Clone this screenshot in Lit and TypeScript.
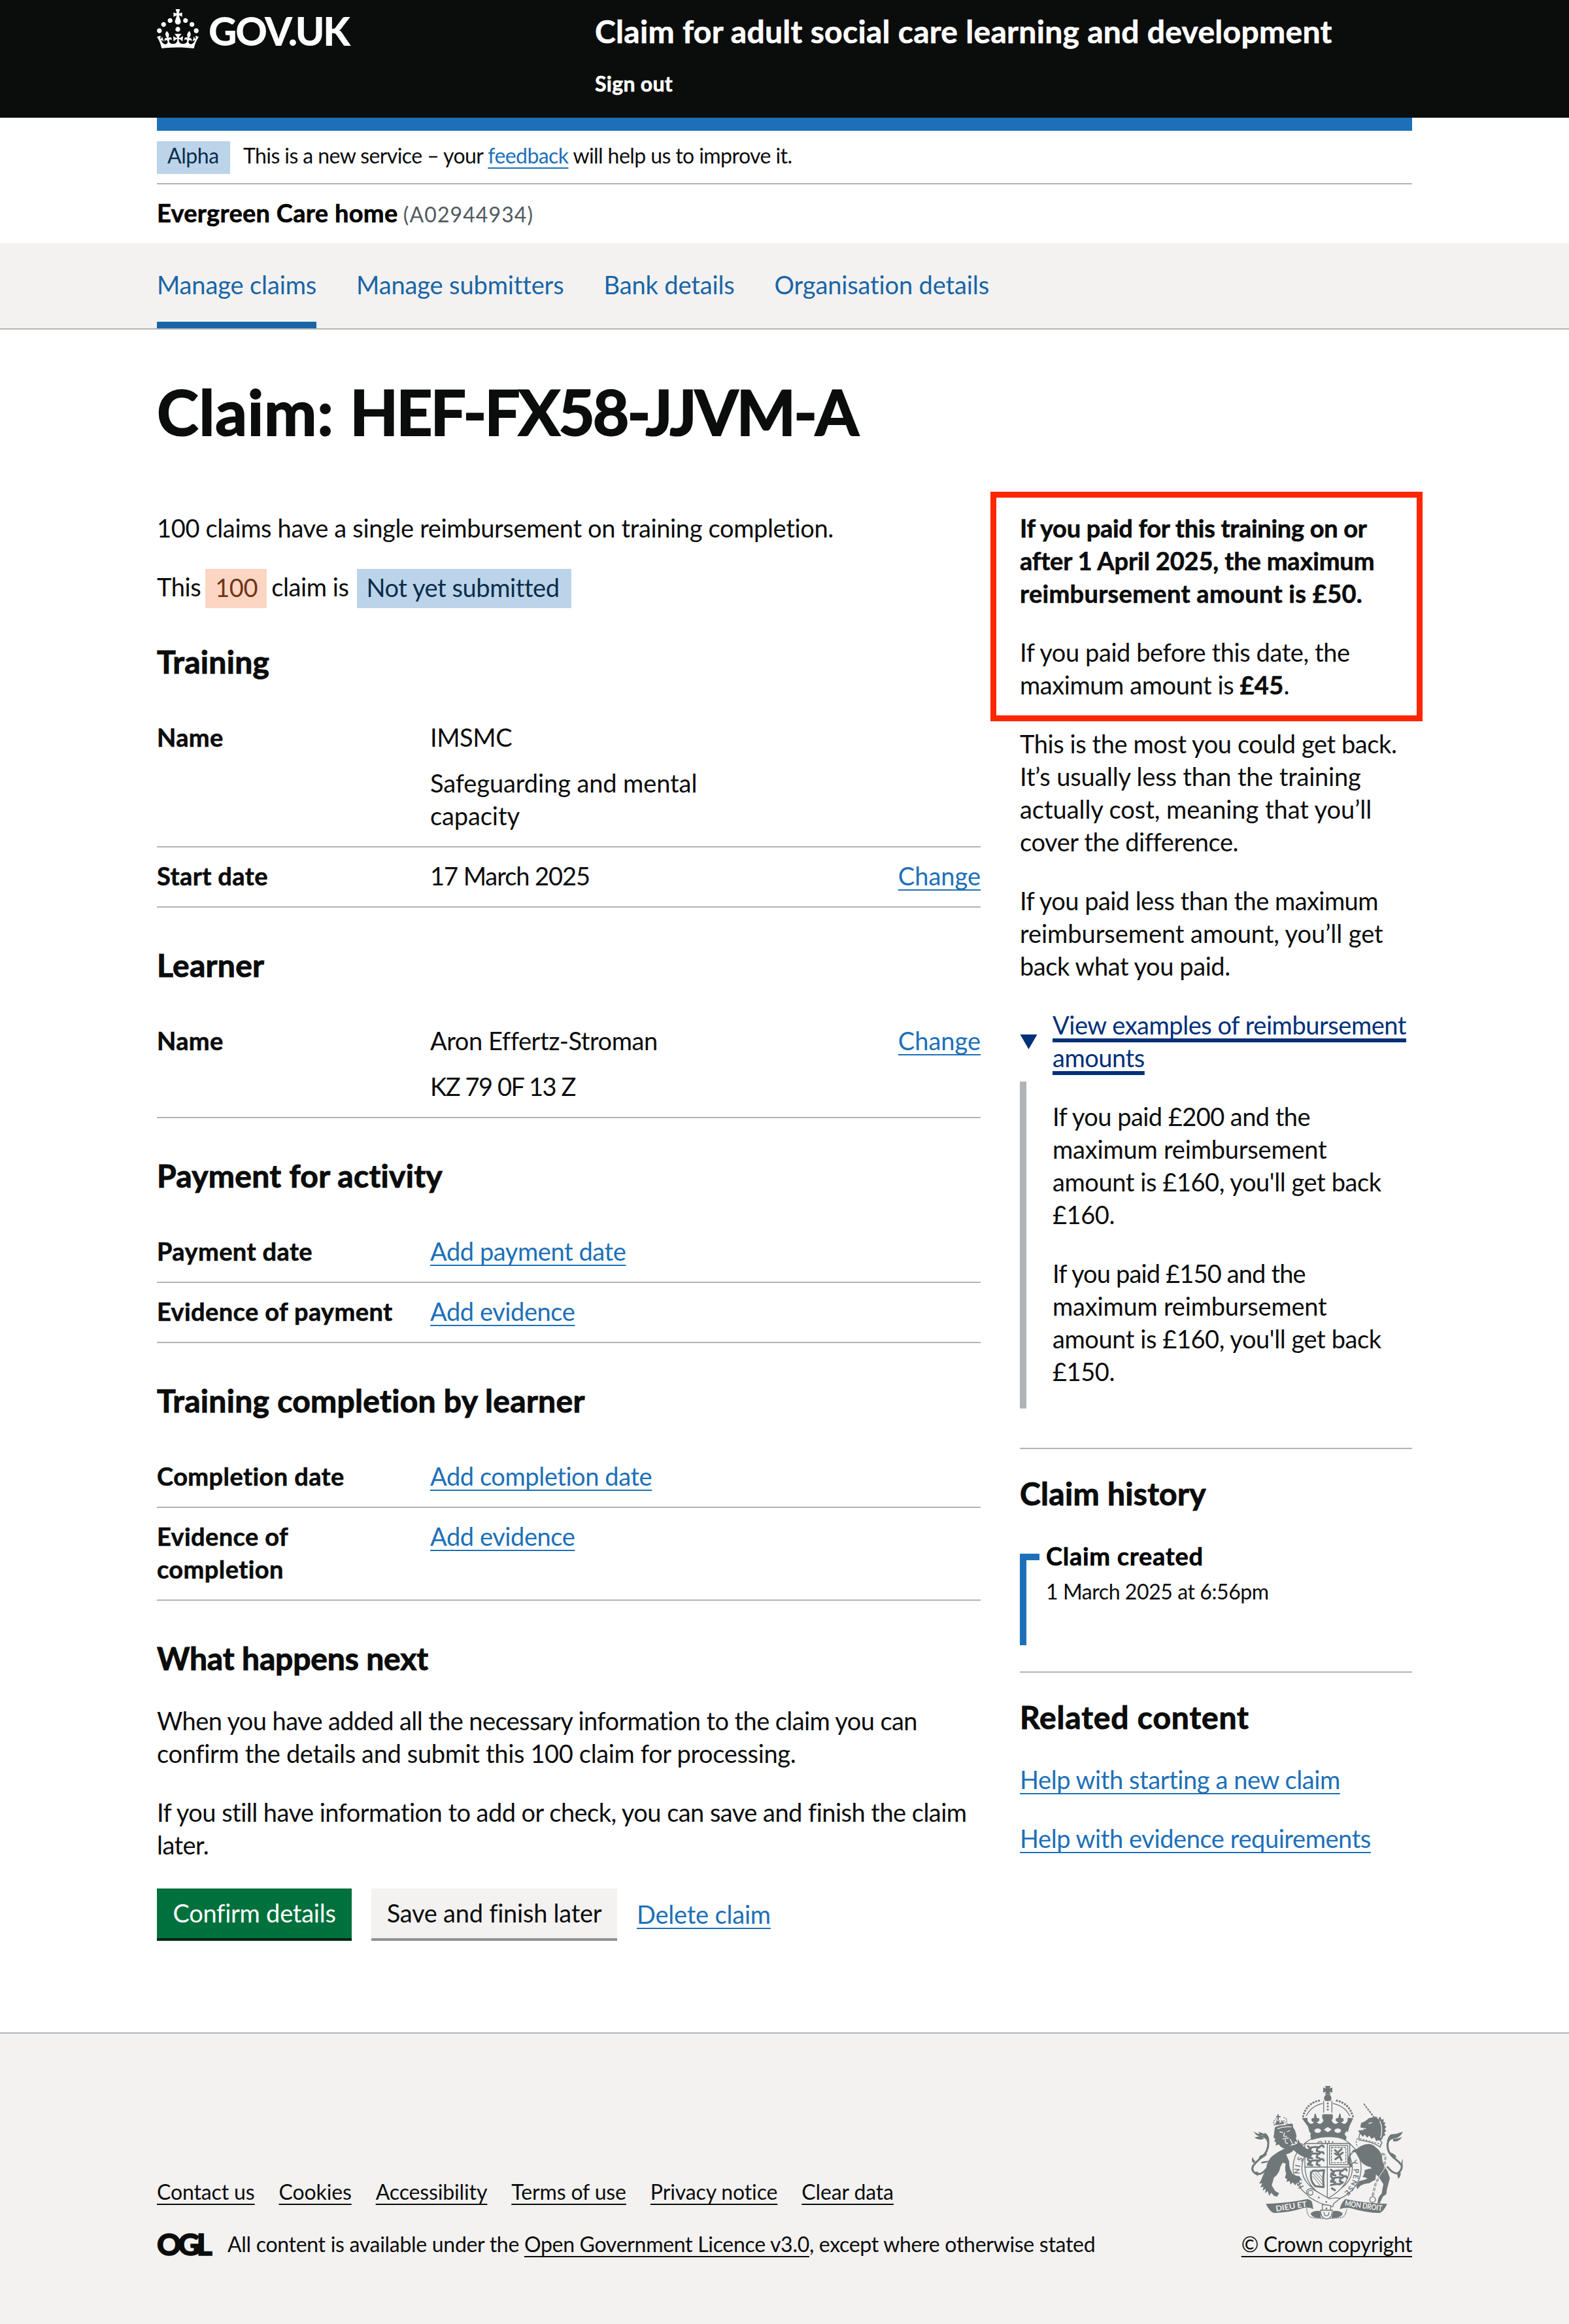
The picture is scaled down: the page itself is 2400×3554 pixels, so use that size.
import { LitElement, html, css, svg, nothing, TemplateResult } from "lit";
import { customElement, property } from "lit/decorators.js";

const base = css`
  * { box-sizing: border-box; }
  p, h1, h2, dl, dd, dt { margin: 0; }
  a {
    color: #1d70b8;
    text-decoration: underline;
    text-decoration-thickness: 2px;
    text-underline-offset: 6px;
    text-decoration-skip-ink: none;
  }
  b, h1, h2, dt { font-weight: 700; letter-spacing: 0.3px; -webkit-text-stroke: 0.6px currentColor; }
  h2 { -webkit-text-stroke-width: 1px; }
`;

@customElement("gov-crown")
class GovCrown extends LitElement {
  static styles = css`
    :host { display: block; width: 64px; height: 60px; }
    svg { display: block; width: 64px; height: 60px; fill: #fff; }
  `;
  render() {
    return html`<svg viewBox="0 0 32 30" aria-hidden="true">
      <path d="M22.6 10.4c-1 .4-2-.1-2.4-1-.4-.9.1-2 1-2.4.9-.4 2 .1 2.4 1s-.1 2-1 2.4m-5.9 6.7c-.9.4-2-.1-2.4-1-.4-.9.1-2 1-2.4.9-.4 2 .1 2.4 1s-.1 2-1 2.4m10.8-3.7c-1 .4-2-.1-2.4-1-.4-.9.1-2 1-2.4.9-.4 2 .1 2.4 1s0 2-1 2.4m3.3 4.8c-1 .4-2-.1-2.4-1-.4-.9.1-2 1-2.4.9-.4 2 .1 2.4 1s-.1 2-1 2.4M17 4.7l2.3 1.2V2.5l-2.3.7-.2-.2.9-3h-3.4l.9 3-.2.2c-.1.1-2.3-.7-2.3-.7v3.4L15 4.7c.1.1.1.2.2.2l-1.3 4c-.1.2-.1.4-.1.6 0 1.1.8 2 1.9 2.2h.7c1-.2 1.9-1.1 1.9-2.1 0-.2 0-.4-.1-.6l-1.3-4c-.1-.2 0-.2.1-.3m-7.6 5.7c.9.4 2-.1 2.4-1 .4-.9-.1-2-1-2.4-.9-.4-2 .1-2.4 1s0 2 1 2.4m-5 3c.9.4 2-.1 2.4-1 .4-.9-.1-2-1-2.4-.9-.4-2 .1-2.4 1s.1 2 1 2.4m-3.2 4.8c.9.4 2-.1 2.4-1 .4-.9-.1-2-1-2.4-.9-.4-2 .1-2.4 1s0 2 1 2.4m14.8 11c4.4 0 8.6.3 12.3.8 1.1-4.5 2.4-7 3.7-8.8l-2.5-.9c.2 1.3.3 1.9 0 2.7-.4-.4-.8-1.1-1.1-2.3l-1.2 4c.7-.5 1.3-.8 2-.9-1.1 2.5-2.6 3.1-3.5 3-1.1-.2-1.7-1.2-1.5-2.1.3-1.2 1.5-1.5 2.1-.1 1.1-2.3-.8-3-2-2.3 1.9-1.9 2.1-3.5.6-5.6-2.1 1.6-2.1 3.2-1.2 5.5-1.2-1.4-3.2-.6-2.5 1.6.9-1.4 2.1-.5 1.9.8-.2 1.1-1.7 2.1-3.5 1.9-2.7-.2-2.9-2.1-2.9-3.6.7-.1 1.9.5 2.9 1.9l.4-4.3c-1.1 1.1-2.1 1.4-3.2 1.4.4-1.2 2.1-3 2.1-3h-5.4s1.7 1.9 2.1 3c-1.1 0-2.1-.2-3.2-1.4l.4 4.3c1-1.4 2.2-2 2.9-1.9-.1 1.5-.2 3.4-2.9 3.6-1.9.2-3.4-.8-3.5-1.9-.2-1.3 1-2.2 1.9-.8.7-2.3-1.2-3-2.5-1.6.9-2.2.9-3.9-1.2-5.5-1.5 2-1.3 3.7.6 5.6-1.2-.7-3.1 0-2 2.3.6-1.4 1.8-1.1 2.1.1.2.9-.3 1.9-1.5 2.1-.9.2-2.4-.5-3.5-3 .6 0 1.2.3 2 .9l-1.2-4c-.3 1.1-.7 1.9-1.1 2.3-.3-.8-.2-1.4 0-2.7l-2.9.9C1.3 23 2.6 25.5 3.7 30c3.7-.5 7.9-.8 12.3-.8"/>
    </svg>`;
  }
}

@customElement("royal-arms")
class RoyalArms extends LitElement {
  static styles = css`
    :host { display: block; width: 232px; height: 204px; }
    svg { display: block; width: 232px; height: 204px; font-family: Lato, "Open Sans", sans-serif; font-weight: 700; }
    .f { fill: #6f7779; }
    .g { fill: #f3f2f1; }
    .l { fill: none; stroke: #6f7779; stroke-width: 4; }
    .gl { fill: none; stroke: #f3f2f1; stroke-width: 4; }
    .m { fill: none; stroke: #6f7779; stroke-width: 9; stroke-linecap: round; stroke-linejoin: round; }
    .pearls { stroke-width: 10; }
    .fine { stroke-width: 3; }
    .go { fill: #f3f2f1; stroke: #6f7779; stroke-width: 4; }
  `;
  passant(x: number, y: number) {
    return svg`<path class="m" d="M${x + 6} ${y + 4}l8 8M${x + 14} ${y + 12}q24-8 44-2M${x + 20} ${y + 14}l-6 14 12 2M${x + 50} ${y + 12}l-4 14 14 4M${x + 58} ${y + 8}q16-14 20 0M${x + 8} ${y + 20}l-2 8"/>`;
  }
  render() {
    return html`<svg viewBox="222 90 696 612" aria-hidden="true">
      <defs>
        <path id="garter" d="M464 552A124 121 0 1 1 645 580"/>
      </defs>
      <ellipse class="go" cx="570" cy="466" rx="156" ry="150"/>
      <ellipse class="l" cx="570" cy="466" rx="116" ry="112"/>
      <text class="f" font-size="34"><textPath href="#garter" textLength="560">HONI SOIT QUI MAL Y PENSE</textPath></text>
      <path class="f" d="M560 90h26l-5 12 13-5v24l-13-5 5 12h-26l5-12-13 5V97l13 5z"/>
      <path class="f" d="M556 150q0-22 17-22t17 22l-4 8h-26z"/>
      <path class="m pearls" stroke-dasharray="0 13.5" d="M460 229Q476 166 542 155M688 229Q670 166 604 155"/>
      <path class="l" d="M474 228Q496 182 550 170M674 228Q652 182 596 170"/>
      <path class="l" d="M554 158v54M592 158v54"/>
      <path class="m" stroke-dasharray="0 14" d="M573 156v56"/>
      <path class="f" d="M454 238l26-2v14q16 24 30 6-12 0-12-12 2-10 12-6 0-14 5-24 6 10 8 24 10-4 12 6-2 12-14 12 20 18 32-6l-6-16 2-14h46l2 14-6 16q14 24 32 6-12 0-14-12 2-10 12-6 2-14 8-24 5 10 5 24 10-4 12 6 0 12-12 12 18 18 30-6v-14l26 2-18 38-8 30-8 32q-76-26-158 0l-8-32-8-30z"/>
      <ellipse class="g" cx="527" cy="295" rx="15" ry="10"/>
      <ellipse class="g" cx="619" cy="295" rx="15" ry="10"/>
      <path class="g" d="M555 290l18-12 18 12-18 12z"/>
      <path class="g" d="M474 312l12-16 10 14-8 14zM672 312l-12-16-10 14 8 14z"/>
      <path class="go" d="M468 354h206v106q-2 96-103 146-101-50-103-146z"/>
      <path class="l" d="M571 354v250M468 462h206"/>
      ${this.passant(476, 362)}${this.passant(476, 392)}${this.passant(476, 424)}
      ${this.passant(582, 470)}${this.passant(582, 502)}
      <path class="m" d="M588 545q20-8 40-4l14-8M592 560l14 8"/>
      <rect class="l" x="581" y="363" width="84" height="88"/>
      <rect class="l" x="590" y="372" width="66" height="70" stroke-dasharray="10 4"/>
      <path class="m" d="M606 384l12 12 18-16M618 396l10 16-20 14M628 412l8 18M628 406l14-10M606 400l10 6"/>
      <path class="m" d="M496 486q-6 40 20 64l38 4q-4-44 2-78l-30 4q-20-6-28 6"/>
      <path class="l fine" d="M504 490l44 52M514 486l36 42M526 484l24 28M504 504l34 42"/>
      <path class="go" d="M478 568q14-14 34 0l70 40q26-8 48-2l-30 24-4 14q-60-10-110-46-14-16-8-30z"/>
      <circle class="l" cx="494" cy="580" r="11"/>
      <circle class="f" cx="532" cy="602" r="4"/><circle class="f" cx="566" cy="622" r="4"/>
      <path class="go" d="M548 634v34h38v-30z"/>
      <circle class="f" cx="567" cy="652" r="4"/>

      <path class="f" d="M432 360q-26-2-48 14-34 12-66 38-26 24-28 60-16 30-22 48l-10 18 14-2-8 20 14-4-4 18 14-8-2 20 12-10 6 22 10-14 12 14 14 4 10-16-18-10-16-26 10-36q24-16 30-50l10-18 14 4q-6 26 2 46l-6 20 10 4-2 14 14-4 4 16 10-10 12 14 6-14 16 6-6-18 18 4-16-16-30-14q-18-30-16-58l-14-32q26-8 34-20 30 30 64 36l6-8 10 2-4-14 12-4-12-8 4-10-16 2q-30-16-44-46z"/>
      <path class="f" d="M330 280q20-12 44-10 32-10 38-6l2 16q14 20 16 44l-4 4 8 20-14-4 4 14-14-4q-14 20-34 24-18-4-28-20l-14 6 2-18-8 2 4-20-8 2z"/>
      <path class="gl" d="M342 286q30-12 64-8M352 300l16 4M386 300l14-6M376 304l-6 16 16 2M366 334q16-8 28-4M380 334q-8 22 10 18M400 334l10 18"/>
      <path class="l" stroke-dasharray="7 4" d="M328 272l-4-20 14-14 14-4M386 266l-2-24-14-8M332 264l48-6M336 250h44"/>
      <path class="f" d="M342 220h6v8h8v6h-8v12h-6v-12h-6v-6h6zM336 256l10-8 8 12 12-10 8 14-44 6z"/>
      <path class="m" d="M290 472q-24 30-48 20-24-16-10-38 16-20 40-38 30-30 28-66-4-24-24-28"/>
      <path class="f" d="M304 350q-6-22-26-32-20-4-22-18l26 10 2-6q24 16 20 46zM276 322q-30 4-44-24 14 12 30 12zM280 332q-22 10-44-6 22-4 30-8zM232 444q-12-10-4-28 6 16 14 20zM256 426q-4-20 40-26-10 18-32 24zM270 438q20-6 36-4-20 14-40 10zM236 484q12 2 12 22 8-6 6-22z"/>
      <path class="f" d="M424 356q20-4 34-2l-32 30z"/>

      <path class="f" d="M722 280l4-20q16-4 36-22l32-8 8 10q24 10 24 34 12 40-4 56-6 18-14 20-30-18-76-18l-16-32-4-6 28-2q-10-12-18-12z"/>
      <path class="f" d="M806 236l10-4 2 12 12-2-2 14 10 2-6 12 10 6-8 12 8 8-10 8 6 12-12 4-2 14-10-4q14-50-8-94z"/>
      <path class="gl" d="M760 262l16-4M812 250q16 34 4 78M730 284l18 2"/>
      <path class="l" stroke-dasharray="10 4" d="M738 172l44 60M739 171l46 60"/>
      <path class="f" d="M786 246l10-16 8 14z"/>
      <path class="go" d="M716 338q0-24 6-32l12 14 8-10 12 14 10-10 10 16 14-8 8 18 14-4 12 14q-8 12-8 20-40-26-98-32z"/>
      <path class="l" stroke-dasharray="8 6" d="M710 330q-14 20 2 40M720 332l100 26"/>
      <path class="f" d="M684 392q4-10 24-14 14-14 38-20 30-6 48 14 20 14 28 40 0 34 24 66l12 34-14 54-2 20-16 12-14 30-10 2q-2-28 18-46l8-44-22-34q-28-22-36-44-34-6-50-34l-20-34-18 2q-8 14-4 46l10 16-10 6q-20-22-8-56z"/>
      <path class="f" d="M742 476q24-10 54-6l-4 50-30 16q-24 2-40 12l-14 16-4-16 14-22q26-4 38-12l-24-8q12-12 10-30z"/>
      <path class="m" d="M848 462q20 28 44 30 24-16 20-38-12-18-36-34-34-30-28-66 4-26 26-28"/>
      <path class="f" d="M846 356q-4-26 16-44l24-2 32-10q-12 24-34 30-26 2-38 26zM872 334q20 0 42-10-14 24-40 20zM888 416q-10-20-38-22 14 20 32 26zM912 454q-2-20 4-30 2 30-2 40zM890 486l6 30q12-10 12-28z"/>
      <path class="m" stroke-dasharray="9 13" d="M824 402q16 2 12 30l-4 40-20 28-20 40-12 50"/>
      <path class="gl fine" d="M824 402q16 2 12 30l-4 40-20 28-20 40-12 50"/>
      <circle class="l" cx="779" cy="611" r="13"/>

      <path class="f" d="M289 631q90-2 190-22 16 2 22 14l6 32q-26-12-50-4-60 20-130 22-20-4-38-42z"/>
      <path class="f" d="M846 631q-96-2-192-22-18 12-26 46 34-12 60-2 60 18 122 20 16-2 36-42z"/>
      <text class="g" font-size="36" textLength="144" lengthAdjust="spacingAndGlyphs" transform="translate(336 666) rotate(-9)">DIEU ET</text>
      <text class="g" font-size="36" textLength="172" lengthAdjust="spacingAndGlyphs" transform="translate(650 640) rotate(8)">MON DROIT</text>
      <path class="l" stroke-dasharray="6 3" d="M476 652q4 40 26 42 60 8 134 0 20-6 24-40"/>
      <path class="f" d="M494 676q12-16 44-12l4 32q-40 2-48-20zM642 676q-12-16-44-12l-8 32q44 2 52-20z"/>
      <path class="go" d="M540 660h54q0 38-27 40-27-2-27-40z"/>
      <path class="l" d="M556 668q0 18 11 18t12-18"/>
    </svg>`;
  }
}

interface Row { key: TemplateResult | string; value: TemplateResult; change?: boolean }

@customElement("summary-section")
class SummarySection extends LitElement {
  @property() heading = "";
  @property({ attribute: false }) rows: Row[] = [];
  static styles = [base, css`
    :host { display: block; }
    h2 { font-size: 48px; line-height: 60px; margin-bottom: 42px; }
    dt { letter-spacing: 0.4px; }
    .row { display: grid; grid-template-columns: 418px 1fr auto; padding: 18px 0 22px; border-bottom: 2px solid #b1b4b6; }
    .row p + p { margin-top: 20px; }
    .n { letter-spacing: -1.05px; }
    .ni { letter-spacing: -1.45px; }
    .w { letter-spacing: -0.1px; }
    .change { letter-spacing: 0; }
  `];
  render() {
    return html`<h2>${this.heading}</h2>
      <dl>${this.rows.map(r => html`<div class="row">
        <dt>${r.key}</dt><dd>${r.value}</dd>
        ${r.change ? html`<dd class="change"><a>Change</a></dd>` : nothing}
      </div>`)}</dl>`;
  }
}

@customElement("app-root")
class AppRoot extends LitElement {
  static styles = [base, css`
    :host {
      display: block; width: 2400px; background: #fff; color: #0b0c0c;
      font: 400 38px/50px Lato, "Open Sans", sans-serif; letter-spacing: -0.42px;
    }
    .wrap { width: 1920px; margin: 0 auto; }
    .small { font-size: 32px; line-height: 40px; }
    header { background: #0b0c0c; height: 180px; color: #fff; }
    header .wrap { display: flex; }
    .logo { display: flex; width: 670px; padding-top: 14px; gap: 15px; }
    .logo b { font-size: 60px; line-height: 72px; font-weight: 900; letter-spacing: -2.3px; margin-top: -3px; -webkit-text-stroke: 0; }
    .svc { padding-top: 18px; }
    .svc b { display: block; font-size: 48px; line-height: 60px; }
    .svc .out { font-size: 32px; line-height: 40px; margin-top: 30px; }
    .bar { height: 20px; background: #1d70b8; }
    .phase { display: flex; align-items: flex-start; gap: 20px; height: 82px; padding-top: 16px; border-bottom: 2px solid #b1b4b6; }
    .phase .tag { background: #bbd4ea; color: #0c2d4a; padding: 0 16px; width: 112px; height: 50px; line-height: 43px; font-size: 32px; }
    .phase .msg { padding-top: 2px; letter-spacing: -0.58px; white-space: nowrap; }
    .org { padding: 18px 0 22px; height: 90px; }
    .org b { color: #000; }
    .org span { font-size: 32px; color: #505a5f; letter-spacing: 1.1px; margin-left: -1px; }
    nav { background: #f3f2f1; border-bottom: 2px solid #b1b4b6; }
    nav .wrap { display: flex; gap: 61px; }
    nav .item { color: #1a65a6; padding: 38px 0 32px; border-bottom: 10px solid transparent; letter-spacing: -0.13px; white-space: nowrap; }
    nav .on { border-color: #1a65a6; }
    main { padding: 75px 0 140px; }
    h1 { font-size: 96px; line-height: 100px; margin-bottom: 103px; letter-spacing: -2.95px; -webkit-text-stroke-width: 2px; }
    h1 span { letter-spacing: 0.9px; }
    h2 { font-size: 48px; line-height: 60px; margin-bottom: 40px; }
    .cols { display: flex; gap: 60px; }
    .left { width: 1260px; }
    .right { width: 600px; position: relative; white-space: nowrap; }
    p + p { margin-top: 40px; }
    .chips { display: flex; height: 50px; align-items: flex-start; gap: 7px; white-space: nowrap; }
    .chip { height: 60px; line-height: 56px; margin-top: -2px; padding: 0 15px; }
    .orange { background: #fcd6c3; color: #6e3619; width: 94px; }
    .blue { background: #bbd4ea; color: #0c2d4a; width: 328px; margin-left: 5px; }
    .first { margin-top: 60px; }
    .sec { margin-top: 58px; }
    .tight { letter-spacing: -0.15px; }
    .n1 { letter-spacing: -0.6px; }
    .n2 { letter-spacing: -0.54px; }
    .n3 { letter-spacing: -0.35px; }
    .btns { display: flex; gap: 30px; margin-top: 42px; height: 80px; white-space: nowrap; }
    .btn { height: 80px; padding: 12px 0; text-align: center; color: #fff; background: #00703c; border-bottom: 4px solid #002413; width: 298px; letter-spacing: -0.25px; }
    .btn.grey { background: #f3f2f1; color: #0b0c0c; border-color: #929191; width: 376px; }
    .del { padding-top: 14px; letter-spacing: -0.2px; }
    .mark { position: absolute; left: -45px; top: -30px; width: 661px; height: 351px; border: 9px solid #ff2600; }
    .k1 { letter-spacing: -0.3px; }
    .k2 { letter-spacing: -0.15px; }
    .k3 { letter-spacing: 0.3px; }
    .s0 { letter-spacing: -0.05px; }
    .s1 { letter-spacing: -0.2px; }
    .s2 { letter-spacing: -0.55px; }
    .s3 { letter-spacing: -0.85px; }
    .sum { display: flex; margin-top: 40px; }
    .tri { width: 50px; padding-top: 40px; }
    .tri svg { display: block; fill: #003078; }
    .sum a { color: #003078; text-decoration-thickness: 6px; letter-spacing: -0.45px; }
    .det { border-left: 10px solid #b1b4b6; margin: 12px 0 60px; padding: 28px 0 32px 40px; }
    .hr { height: 2px; background: #b1b4b6; margin-bottom: 38px; }
    .tl { display: flex; }
    .stem { width: 30px; height: 140px; margin: 22px 10px 40px 0; border-left: 10px solid #1d70b8; }
    .stem div { height: 10px; background: #1d70b8; }
    .tl b { color: #000; letter-spacing: 0.7px; }
    .tl .small { margin-top: 10px; }
    .wide { letter-spacing: 0.85px; }
    footer { background: #f3f2f1; border-top: 2px solid #b1b4b6; height: 446px; padding-top: 80px; }
    footer .wrap { display: flex; justify-content: space-between; align-items: flex-end; height: 262px; font-size: 32px; line-height: 40px; white-space: nowrap; }
    footer a { color: #0b0c0c; }
    .links { display: flex; gap: 37px; margin-bottom: 40px; letter-spacing: -0.13px; }
    .lic { display: flex; letter-spacing: -0.3px; }
    .ogl { width: 108px; font-weight: 900; font-size: 46px; letter-spacing: -5px; -webkit-text-stroke: 1.5px #0b0c0c; }
    .crest { display: flex; flex-direction: column; align-items: flex-end; gap: 18px; width: 262px; }
    .crest royal-arms { margin-right: 14px; }
  `];

  private link = (t: string) => html`<p><a>${t}</a></p>`;

  render() {
    const training: Row[] = [
      { key: "Name", value: html`<p>IMSMC</p><p class="w">Safeguarding and mental<br>capacity</p>` },
      { key: "Start date", value: html`<p class="n">17 March 2025</p>`, change: true },
    ];
    const learner: Row[] = [
      { key: "Name", value: html`<p>Aron Effertz-Stroman</p><p class="ni">KZ 79 0F 13 Z</p>`, change: true },
    ];
    const payment: Row[] = [
      { key: "Payment date", value: this.link("Add payment date") },
      { key: "Evidence of payment", value: this.link("Add evidence") },
    ];
    const completion: Row[] = [
      { key: "Completion date", value: this.link("Add completion date") },
      { key: html`Evidence of<br>completion`, value: this.link("Add evidence") },
    ];
    return html`
      <header><div class="wrap">
        <div class="logo"><gov-crown></gov-crown><b>GOV.UK</b></div>
        <div class="svc"><b>Claim for adult social care learning and development</b><b class="out">Sign out</b></div>
      </div></header>
      <div class="wrap">
        <div class="bar"></div>
        <div class="phase"><span class="tag">Alpha</span><span class="msg small">This is a new service – your <a>feedback</a> will help us to improve it.</span></div>
        <div class="org"><b>Evergreen Care home</b> <span>(A02944934)</span></div>
      </div>
      <nav><div class="wrap">
        ${["Manage claims", "Manage submitters", "Bank details", "Organisation details"].map((t, i) => html`<div class="item ${i ? "" : "on"}">${t}</div>`)}
      </div></nav>
      <main class="wrap">
        <h1><span>Claim: </span>HEF-FX58-JJVM-A</h1>
        <div class="cols">
          <div class="left">
            <p class="n3">100 claims have a single reimbursement on training completion.</p>
            <p class="chips"><span>This</span><span class="chip orange">100</span><span>claim is</span><span class="chip blue">Not yet submitted</span></p>
            <summary-section class="first" heading="Training" .rows=${training}></summary-section>
            <summary-section class="sec" heading="Learner" .rows=${learner}></summary-section>
            <summary-section class="sec" heading="Payment for activity" .rows=${payment}></summary-section>
            <summary-section class="sec" heading="Training completion by learner" .rows=${completion}></summary-section>
            <h2 class="sec tight">What happens next</h2>
            <p><span class="n1">When you have added all the necessary information to the claim you can</span><br><span class="n3">confirm the details and submit this 100 claim for processing.</span></p>
            <p class="n2">If you still have information to add or check, you can save and finish the claim<br>later.</p>
            <div class="btns"><div class="btn">Confirm details</div><div class="btn grey">Save and finish later</div><div class="del"><a>Delete claim</a></div></div>
          </div>
          <div class="right">
            <div class="mark"></div>
            <p><b class="k1">If you paid for this training on or</b><br><b class="k2">after 1 April 2025, the maximum</b><br><b class="k3">reimbursement amount is £50.</b></p>
            <p>If you paid before this date, the<br>maximum amount is <b>£45</b>.</p>
            <p>This is the most you could get back.<br><span class="s1">It’s usually less than the training</span><br><span class="s0">actually cost, meaning that you’ll</span><br>cover the difference.</p>
            <p><span class="s2">If you paid less than the maximum</span><br><span class="s0">reimbursement amount, you’ll get</span><br>back what you paid.</p>
            <div class="sum">
              <div class="tri"><svg width="28" height="23" viewBox="0 0 28 23"><path d="M0.5 0h26L13.5 22.5z"/></svg></div>
              <a>View examples of reimbursement<br>amounts</a>
            </div>
            <div class="det">
              <p><span class="s2">If you paid £200 and the</span><br><span class="s1">maximum reimbursement</span><br>amount is £160, you'll get back<br>£160.</p>
              <p><span class="s3">If you paid £150 and the</span><br><span class="s1">maximum reimbursement</span><br>amount is £160, you'll get back<br>£150.</p>
            </div>
            <div class="hr"></div>
            <h2>Claim history</h2>
            <div class="tl"><div class="stem"><div></div></div><div><b>Claim created</b><div class="small">1 March 2025 at 6:56pm</div></div></div>
            <div class="hr"></div>
            <h2 class="wide">Related content</h2>
            <p><a>Help with starting a new claim</a></p>
            <p><a>Help with evidence requirements</a></p>
          </div>
        </div>
      </main>
      <footer><div class="wrap">
        <div>
          <div class="links">${["Contact us", "Cookies", "Accessibility", "Terms of use", "Privacy notice", "Clear data"].map(t => html`<a>${t}</a>`)}</div>
          <div class="lic"><span class="ogl">OGL</span><span>All content is available under the <a>Open Government Licence v3.0</a>, except where otherwise stated</span></div>
        </div>
        <div class="crest"><royal-arms></royal-arms><a>© Crown copyright</a></div>
      </div></footer>`;
  }
}
